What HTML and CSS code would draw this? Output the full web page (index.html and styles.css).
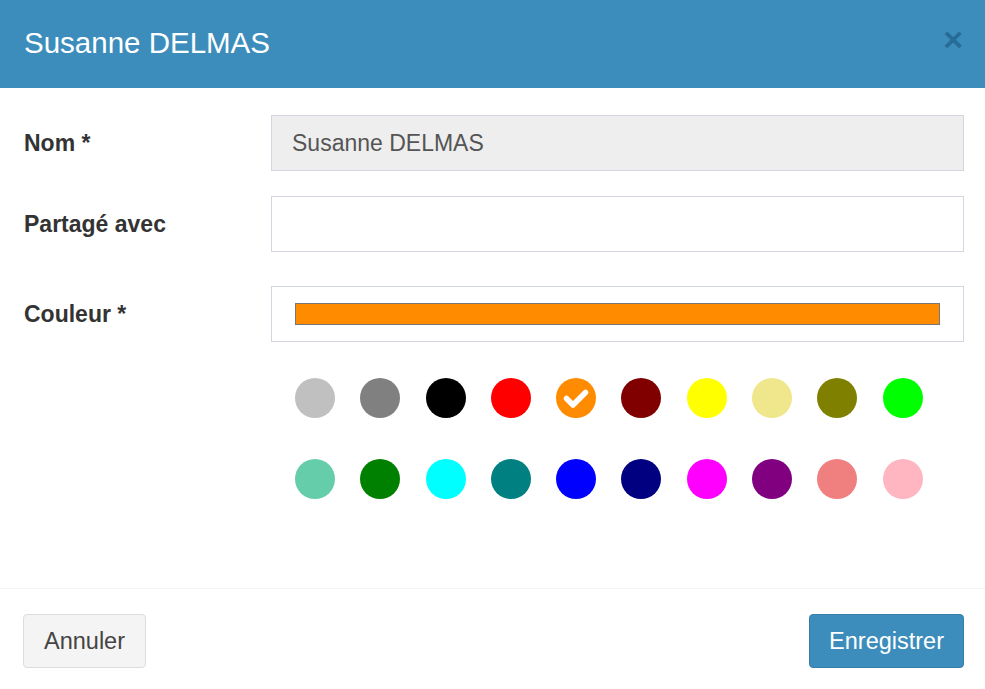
FILE: index.html
```html
<!DOCTYPE html>
<html lang="fr">
<head>
<meta charset="utf-8">
<link rel="stylesheet" href="styles.css">
</head>
<body>
<div class="modal">
  <div class="header">
    <h4 class="title">Susanne DELMAS</h4>
    <span class="close">&times;</span>
  </div>
  <div class="body">
    <div class="row">
      <label class="label">Nom *</label>
      <div class="field"><div class="input disabled">Susanne DELMAS</div></div>
    </div>
    <div class="row">
      <label class="label">Partagé avec</label>
      <div class="field"><div class="input"></div></div>
    </div>
    <div class="row">
      <label class="label">Couleur *</label>
      <div class="field">
        <div class="input colorbox"><div class="colorbar"></div></div>
        <div class="swatches">
          <span class="sw" style="background:#c0c0c0"></span>
          <span class="sw" style="background:#808080"></span>
          <span class="sw" style="background:#000000"></span>
          <span class="sw" style="background:#ff0000"></span>
          <span class="sw sel" style="background:#ff8c00"><svg viewBox="0 0 40 40" width="40" height="40"><path d="M10.5 20.5 L17 27 L29.5 14.5" fill="none" stroke="#fff" stroke-width="5.5" stroke-linecap="round" stroke-linejoin="round"/></svg></span>
          <span class="sw" style="background:#800000"></span>
          <span class="sw" style="background:#ffff00"></span>
          <span class="sw" style="background:#f0e68c"></span>
          <span class="sw" style="background:#808000"></span>
          <span class="sw" style="background:#00ff00"></span>
          <span class="sw" style="background:#66cdaa"></span>
          <span class="sw" style="background:#008000"></span>
          <span class="sw" style="background:#00ffff"></span>
          <span class="sw" style="background:#008080"></span>
          <span class="sw" style="background:#0000ff"></span>
          <span class="sw" style="background:#000080"></span>
          <span class="sw" style="background:#ff00ff"></span>
          <span class="sw" style="background:#800080"></span>
          <span class="sw" style="background:#f08080"></span>
          <span class="sw" style="background:#ffb6c1"></span>
        </div>
      </div>
    </div>
  </div>
  <div class="footer">
    <button class="btn btn-default">Annuler</button>
    <button class="btn btn-primary">Enregistrer</button>
  </div>
</div>
</body>
</html>
```
FILE: styles.css
```css
* { box-sizing: border-box; }
html, body { margin: 0; padding: 0; background: #fff; }
body { font-family: "Liberation Sans", Arial, sans-serif; color: #333; }
.modal { width: 985px; height: 689px; display: flex; flex-direction: column; }
.header {
  background: #3c8dbc; height: 88px; flex: 0 0 88px;
  display: flex; align-items: center; justify-content: space-between;
  padding: 0 22px 0 24px;
}
.title { margin: 0; color: #fff; font-weight: normal; font-size: 29.5px; padding-bottom: 2px; }
.close { color: #1f5f86; opacity: 0.7; font-size: 34px; font-weight: bold; line-height: 1; padding-bottom: 10px; }
.body { padding: 27px 21px 0 24px; flex: 1 1 auto; }
.row { display: flex; align-items: flex-start; margin-bottom: 25px; }
.row:nth-child(2) { margin-bottom: 34px; }
.label { width: 247px; flex: 0 0 247px; font-weight: bold; font-size: 23px; line-height: 56px; color: #333; }
.field { flex: 1 1 auto; }
.input {
  height: 56px; border: 1px solid #d2d6de; background: #fff;
  font-size: 23px; color: #555; padding: 0 20px; line-height: 54px;
}
.input.disabled { background: #eee; }
.colorbox { padding: 16px 23px 0 23px; }
.colorbar { height: 22px; background: #ff8c00; border: 1px solid #777; }
.swatches {
  display: grid; grid-template-columns: repeat(10, 40px); column-gap: 25.3px; row-gap: 41px;
  padding: 36px 0 0 24px;
}
.sw { width: 40px; height: 40px; border-radius: 50%; display: block; }
.sw svg { display: block; }
.footer {
  border-top: 1px solid #f4f4f4; height: 101px; flex: 0 0 101px;
  display: flex; justify-content: space-between; align-items: flex-start;
  padding: 25px 21px 0 23px;
}
.btn {
  font-family: "Liberation Sans", Arial, sans-serif; font-size: 23.5px;
  height: 54px; border-radius: 4px; border: 1px solid; padding: 0 20px; cursor: pointer;
}
.btn-default { background: #f4f4f4; border-color: #ddd; color: #444; }
.btn-primary { background: #3c8dbc; border-color: #367fa9; color: #fff; padding: 0 19px; }
```
